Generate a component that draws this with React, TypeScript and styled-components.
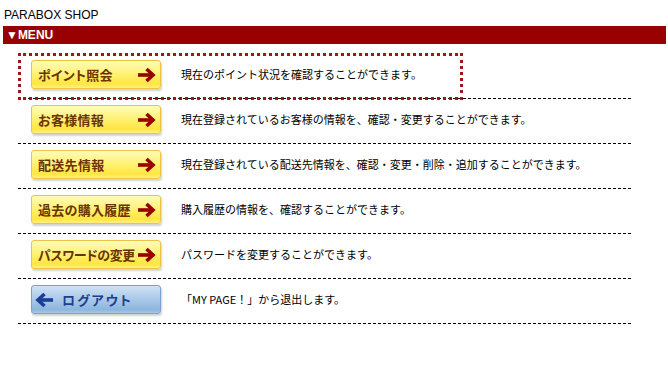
import React from 'react';
import styled, { createGlobalStyle } from 'styled-components';

const GlobalStyle = createGlobalStyle`
  body {
    margin: 0;
    background: #fff;
    font-family: "Liberation Sans", Arial, sans-serif;
  }
`;

type MenuItem = {
  label: string;
  desc: React.ReactNode;
  kind: 'yellow' | 'blue';
};

const items: MenuItem[] = [
  { label: 'ポイント照会', desc: '現在のポイント状況を確認することができます。', kind: 'yellow' },
  { label: 'お客様情報', desc: '現在登録されているお客様の情報を、確認・変更することができます。', kind: 'yellow' },
  { label: '配送先情報', desc: '現在登録されている配送先情報を、確認・変更・削除・追加することができます。', kind: 'yellow' },
  { label: '過去の購入履歴', desc: '購入履歴の情報を、確認することができます。', kind: 'yellow' },
  { label: 'パスワードの変更', desc: 'パスワードを変更することができます。', kind: 'yellow' },
  { label: 'ログアウト', desc: '「MY PAGE！」から退出します。', kind: 'blue' },
];

const Page = styled.div`
  padding: 8px 2px 0 3px;
`;

const Title = styled.div`
  padding-left: 1px;
  font-size: 12px;
  line-height: 14px;
  color: #000;
  margin-bottom: 4px;
`;

const MenuBar = styled.div`
  height: 18px;
  line-height: 18px;
  background: #990000;
  color: #fff;
  font-weight: bold;
  font-size: 12px;
  padding-left: 3px;
`;

const List = styled.ul`
  list-style: none;
  margin: 10px 0 0 15px;
  padding: 0;
  width: 613px;
`;

const Row = styled.li`
  height: 44px;
  border-bottom: 1px dashed #000;
  display: flex;
  align-items: flex-start;
`;

const Link = styled.a<{ $active?: boolean }>`
  box-sizing: border-box;
  margin: 2px 0 0 3px;
  height: 41px;
  width: 439px;
  padding-left: 10px;
  display: flex;
  align-items: flex-start;
  text-decoration: none;
  cursor: pointer;
  outline: ${(p) => (p.$active ? '3px dotted #a31515' : 'none')};
`;

const Button = styled.span<{ $kind: 'yellow' | 'blue' }>`
  box-sizing: border-box;
  flex: none;
  margin-top: 4px;
  width: 130px;
  height: 29px;
  border-radius: 3px;
  display: flex;
  align-items: center;
  gap: ${(p) => (p.$kind === 'yellow' ? '2px' : '8px')};
  justify-content: ${(p) => (p.$kind === 'yellow' ? 'space-between' : 'flex-start')};
  padding: ${(p) => (p.$kind === 'yellow' ? '0 4px 0 6px' : '0 6px 0 3px')};
  border: 1px solid ${(p) => (p.$kind === 'yellow' ? '#ecc444' : '#7aa2cc')};
  background: ${(p) =>
    p.$kind === 'yellow'
      ? 'linear-gradient(to bottom, #fffbb8 0%, #fff27a 45%, #ffe640 85%, #fff08a 100%)'
      : 'linear-gradient(to bottom, #cfe2f4 0%, #a9c8e8 50%, #8db5dd 88%, #a8c8e6 100%)'};
  box-shadow: 1px 2px 2px rgba(0, 0, 0, 0.18);
  font-family: "Noto Sans CJK JP", sans-serif;
  font-feature-settings: "palt";
  font-weight: bold;
  font-size: 13px;
  letter-spacing: ${(p) => (p.$kind === 'yellow' ? '0.3px' : '2px')};
  color: ${(p) => (p.$kind === 'yellow' ? '#6a3300' : '#1c3f90')};
  white-space: nowrap;
`;

const Label = styled.span<{ $tight?: boolean }>`
  letter-spacing: ${(p) => (p.$tight ? '-0.4px' : 'inherit')};
`;

const Desc = styled.span`
  margin: 4px 0 0 20px;
  line-height: 29px;
  font-family: "Noto Sans CJK JP", sans-serif;
  font-size: 11px;
  color: #000;
  white-space: nowrap;
`;

const ArrowRight = () => (
  <svg width="19" height="16" viewBox="0 0 19 16" style={{ flex: 'none' }}>
    <path d="M1 8 H15" stroke="#990000" strokeWidth="3.6" fill="none" />
    <path d="M9.5 2 L16 8 L9.5 14" stroke="#990000" strokeWidth="3.6" fill="none" strokeLinejoin="miter" />
  </svg>
);

const ArrowLeft = () => (
  <svg width="19" height="16" viewBox="0 0 19 16" style={{ flex: 'none' }}>
    <path d="M4 8 H18" stroke="#1a3d99" strokeWidth="3.6" fill="none" />
    <path d="M9.5 2 L3 8 L9.5 14" stroke="#1a3d99" strokeWidth="3.6" fill="none" strokeLinejoin="miter" />
  </svg>
);

export default function App() {
  return (
    <Page>
      <GlobalStyle />
      <Title>PARABOX SHOP</Title>
      <MenuBar>▼MENU</MenuBar>
      <List>
        {items.map((item, i) => (
          <Row key={item.label}>
            <Link $active={i === 0}>
              <Button $kind={item.kind}>
                {item.kind === 'blue' && <ArrowLeft />}
                <Label $tight={item.label.length > 7}>{item.label}</Label>
                {item.kind === 'yellow' && <ArrowRight />}
              </Button>
              <Desc>{item.desc}</Desc>
            </Link>
          </Row>
        ))}
      </List>
    </Page>
  );
}
